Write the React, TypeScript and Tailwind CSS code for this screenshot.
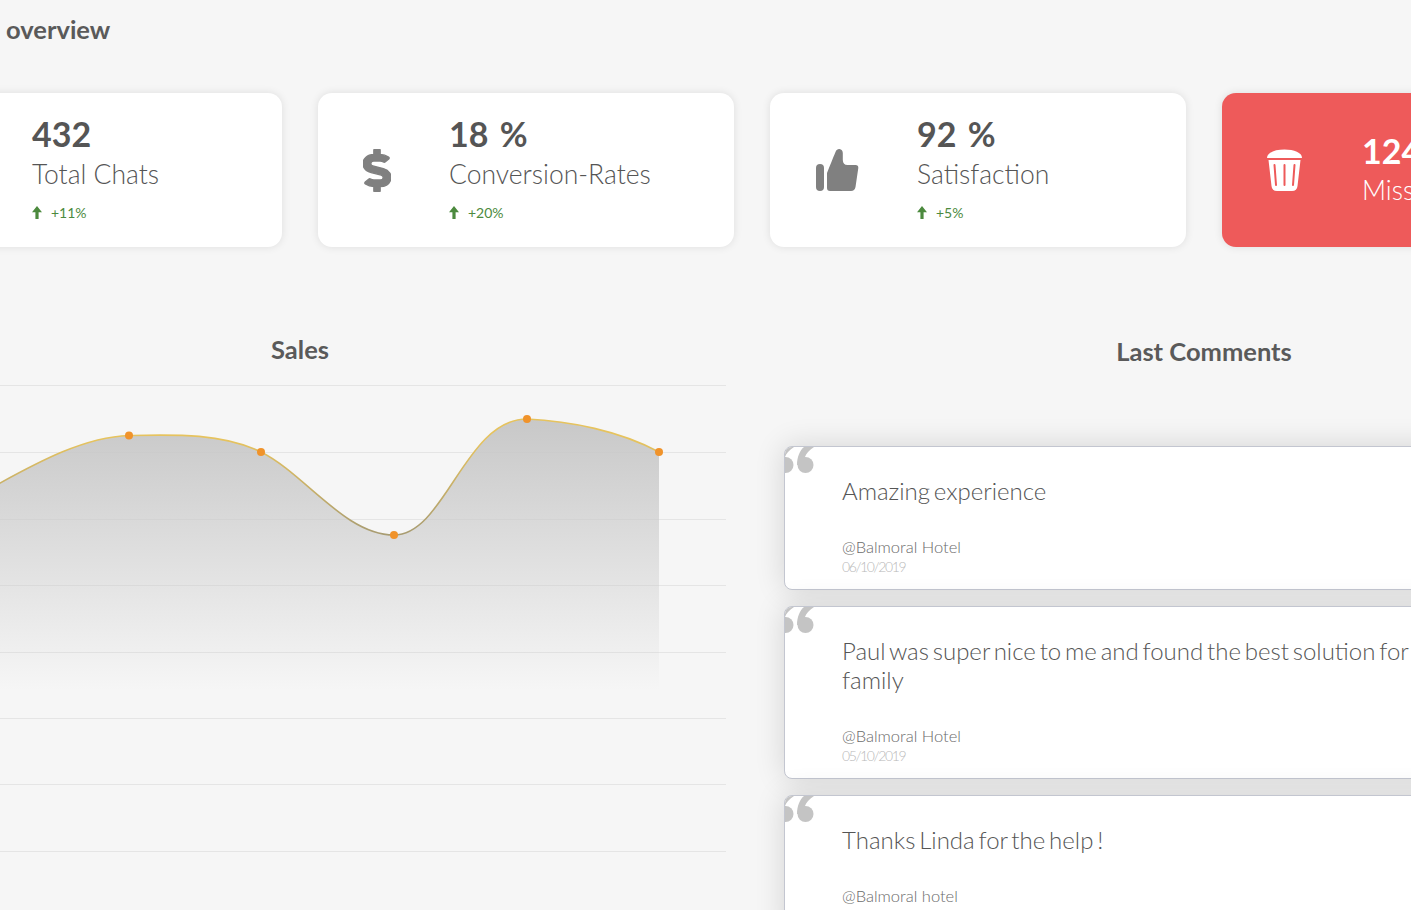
import { FaDollarSign } from "react-icons/fa"

function ThumbIcon() {
  return (
    <svg viewBox="815 148 44 44" className="h-[44px] w-[44px]" fill="#808080">
      <rect x="816" y="164" width="8" height="27" rx="4" />
      <path d="M827 173 C829 168 833 158 835.5 152 C836.5 149.5 838 148.8 839.5 149 C841.5 149.3 842.8 151 842.8 153 L842.8 160 C843 163.5 844.5 165 847.5 165 L855.5 165 C857.5 165 858.5 166.3 858.3 168 L855.5 187 C855 189.8 853.5 191 851 191 L830 191 C828 191 827 189.8 827 188 Z" />
    </svg>
  )
}

function TrashIcon() {
  return (
    <svg viewBox="1268 149 35 44" className="h-[44px] w-[35px]">
      <path fill="#ffffff" d="M1268 159 C1268 153.5 1276 150.5 1285.5 150.5 C1295 150.5 1303 153.5 1303 159 Z" />
      <path fill="#ffffff" d="M1269.5 161 H1301.5 L1298.5 187 Q1298 192 1293 192 H1278 Q1273 192 1272.5 187 Z" />
      <path stroke="#ee5a5a" strokeWidth="2" strokeLinecap="round" d="M1275.5 166 L1277 186 M1285.5 166 V186 M1295.5 166 L1294 186" />
    </svg>
  )
}

function ArrowUp() {
  return (
    <svg viewBox="0 0 10 13" className="h-[13px] w-[10px]" fill="#4c8a3e">
      <path d="M5 0 L10 6.2 L6.6 6.2 L6.6 13 L3.4 13 L3.4 6.2 L0 6.2 Z" />
    </svg>
  )
}

function QuoteMark() {
  return (
    <svg viewBox="0 0 32 28" className="absolute left-[-1px] top-[-1px] h-[28px] w-[32px]" fill="#c4c4c4">
      <circle cx="1.5" cy="19" r="8" />
      <path d="M-7 19 C-7 11 -4 4 0 1 L10 1 C5 4 2 8 1 11 L2 19 Z" />
      <circle cx="21.5" cy="19" r="8" />
      <path d="M13 19 C13 11 16 4 20 1 L30 1 C25 4 22 8 21 11 L22 19 Z" />
    </svg>
  )
}

function SalesChart() {
  const curve =
    "M-126 560 C-80 530 -40 505 -3.5 485 C40 461 85 437 129 435.5 C175 434.5 222 433 261 452 C305 474 345 535 394 535 C445 535 465 419 527 419 C570 421 620 431 659 452"
  const grid = [385, 452, 519, 585, 652, 718, 784, 851]
  const points = [
    [129, 435.5],
    [261, 452],
    [394, 535],
    [527, 419],
    [659, 452],
  ]
  return (
    <svg viewBox="-126 370 852 540" className="mt-[5px] h-[540px] w-[852px]">
      <defs>
        <linearGradient id="salesFill" x1="0" y1="419" x2="0" y2="690" gradientUnits="userSpaceOnUse">
          <stop offset="0" stopColor="#c8c8c8" />
          <stop offset="1" stopColor="#c8c8c8" stopOpacity="0" />
        </linearGradient>
        <linearGradient id="salesLine" x1="0" y1="440" x2="0" y2="535" gradientUnits="userSpaceOnUse">
          <stop offset="0" stopColor="#e6c35e" />
          <stop offset="1" stopColor="#a89c72" />
        </linearGradient>
      </defs>
      {grid.map((y) => (
        <line key={y} x1="-126" x2="726" y1={y + 0.5} y2={y + 0.5} stroke="#e5e5e5" />
      ))}
      <path d={curve + " L659 690 L-126 690 Z"} fill="url(#salesFill)" />
      <path d={curve} fill="none" stroke="url(#salesLine)" strokeWidth="1.6" />
      {points.map(([x, y]) => (
        <circle key={x} cx={x} cy={y} r="4" fill="#f0932b" />
      ))}
    </svg>
  )
}

const stats = [
  { value: "432", label: "Total Chats", delta: "+11%", icon: <div className="w-[63px]" /> },
  {
    value: "18 %",
    label: "Conversion-Rates",
    delta: "+20%",
    icon: (
      <FaDollarSign
        className="h-[43px] w-[28px] stroke-[15px] text-[#808080]"
        preserveAspectRatio="none"
      />
    ),
  },
  { value: "92 %", label: "Satisfaction", delta: "+5%", icon: <ThumbIcon /> },
]

const comments = [
  { text: "Amazing experience", by: "@Balmoral Hotel", date: "06/10/2019" },
  {
    text: "Paul was super nice to me and found the best solution for my family",
    by: "@Balmoral Hotel",
    date: "05/10/2019",
  },
  { text: "Thanks Linda for the help !", by: "@Balmoral hotel", date: "04/10/2019" },
]

export default function App() {
  return (
    <div className="h-[910px] w-[1411px] overflow-hidden bg-[#f6f6f6] font-['Lato',sans-serif] text-[#555555]">
      <div className="ml-[-134px] w-[1772px] pt-[13px]">
        <h1 className="ml-[140px] text-[25.5px] leading-[32px] font-bold text-[#5a5a5a]">overview</h1>

        <div className="mt-[48px] flex gap-[36px]">
          {stats.map((s) => (
            <div
              key={s.label}
              className="flex h-[154px] w-[416px] items-center gap-[58px] rounded-[14px] bg-white pl-[45px] shadow-[0_0_8px_rgba(0,0,0,0.1)]"
            >
              {s.icon}
              <div className="flex flex-col pb-[4px]">
                <span className="text-[34px] leading-[40px] font-bold [word-spacing:3px]">{s.value}</span>
                <span className="text-[26.5px] leading-[40px] font-light">{s.label}</span>
                <span className="mt-[9px] flex items-center gap-[9px] text-[14px] leading-[20px] text-[#4c8a3e]">
                  <ArrowUp />
                  {s.delta}
                </span>
              </div>
            </div>
          ))}
          <div className="flex h-[154px] w-[416px] items-center gap-[60px] rounded-[14px] bg-[#ee5a5a] pl-[45px] text-white shadow-[0_0_8px_rgba(0,0,0,0.1)]">
            <TrashIcon />
            <div className="flex flex-col">
              <span className="text-[34px] leading-[40px] font-bold">124</span>
              <span className="text-[26.5px] leading-[38px] font-light">Missed Chats</span>
            </div>
          </div>
        </div>

        <div className="mt-[86px] flex">
          <section className="ml-[8px] w-[852px]">
            <h2 className="text-center text-[25.5px] leading-[32px] font-bold text-[#5a5a5a]">Sales</h2>
            <SalesChart />
          </section>

          <section className="ml-[58px] mt-[2px] w-[840px]">
            <h2 className="text-center text-[25.5px] leading-[32px] font-bold text-[#5a5a5a]">Last Comments</h2>
            <div className="mt-[79px] flex flex-col gap-[16px]">
              {comments.map((c) => (
                <div
                  key={c.date}
                  className="relative overflow-hidden rounded-[8px] border border-[#c3c6d0] bg-white pt-[29px] pr-[40px] pb-[12px] pl-[57px] shadow-[0_0_30px_rgba(0,0,0,0.14)]"
                >
                  <QuoteMark />
                  <p className="w-[620px] text-[24px] leading-[29px] font-light [word-spacing:-2.7px]">{c.text}</p>
                  <p className="mt-[32px] text-[16.5px] leading-[20px] font-light text-[#6b6b6b]">{c.by}</p>
                  <p className="text-[14px] leading-[20px] font-light tracking-[-1.4px] text-[#b8b8b8]">{c.date}</p>
                </div>
              ))}
            </div>
          </section>
        </div>
      </div>
    </div>
  )
}
